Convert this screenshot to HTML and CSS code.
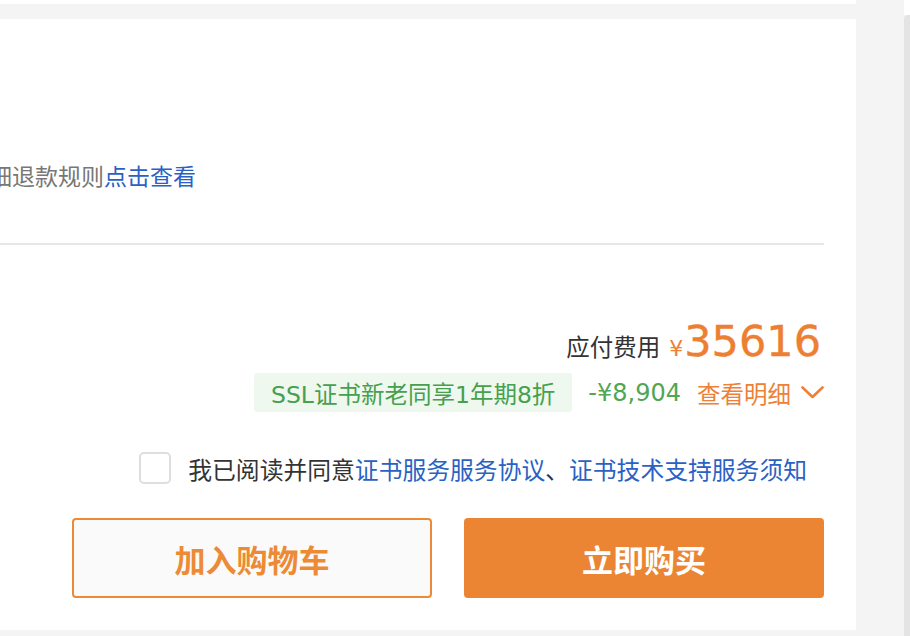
FILE: index.html
```html
<!DOCTYPE html>
<html lang="zh-CN">
<head>
<meta charset="utf-8">
<title>确认订单</title>
<link rel="stylesheet" href="styles.css">
</head>
<body>
<div class="main">
  <div class="prev-card"></div>
  <div class="card">
    <p class="refund"><span class="refund-text">细退款规则</span><a class="link" href="#">点击查看</a></p>
    <div class="divider"></div>
    <div class="price-row">
      <span class="price-label">应付费用</span>
      <span class="currency">¥</span>
      <span class="amount">35616</span>
    </div>
    <div class="discount-row">
      <span class="tag">SSL证书新老同享1年期8折</span>
      <span class="saving">-¥8,904</span>
      <a class="detail" href="#">查看明细
        <svg class="chev" width="23" height="13" viewBox="0 0 23 13" aria-hidden="true"><polyline points="1.5,1.5 11.5,11 21.5,1.5" fill="none" stroke="currentColor" stroke-width="2.6" stroke-linecap="round" stroke-linejoin="round"/></svg>
      </a>
    </div>
    <label class="agree-row">
      <span class="checkbox"></span>
      <span class="agree-text">我已阅读并同意<a class="link" href="#">证书服务服务协议</a>、<a class="link" href="#">证书技术支持服务须知</a></span>
    </label>
    <div class="btn-row">
      <button class="btn btn-ghost">加入购物车</button>
      <button class="btn btn-primary">立即购买</button>
    </div>
  </div>
</div>
<div class="side-gap"></div>
<div class="scroll">
  <div class="scroll-top"></div>
  <div class="scroll-track"></div>
</div>
</body>
</html>
```
FILE: styles.css
```css
html, body {
  margin: 0;
  padding: 0;
}
body {
  width: 910px;
  height: 636px;
  overflow: hidden;
  display: flex;
  background: #f4f4f4;
  font-family: "Liberation Sans", "Noto Sans CJK SC", sans-serif;
  color: #333;
}
.main {
  width: 856px;
  display: flex;
  flex-direction: column;
}
.prev-card {
  height: 4px;
  background: #fff;
}
.card {
  margin-top: 15px;
  height: 611px;
  box-sizing: border-box;
  background: #fff;
  padding: 0 32px 0 0;
  display: flex;
  flex-direction: column;
}
.refund {
  margin: 142px 0 0 -11px;
  font-size: 23px;
  line-height: 32px;
  color: #777;
  white-space: nowrap;
}
.link {
  color: #2a62c4;
  text-decoration: none;
}
.divider {
  margin-top: 50px;
  height: 2px;
  background: #e6e6e6;
}
.price-row {
  margin-top: 73px;
  margin-right: 3px;
  display: flex;
  justify-content: flex-end;
  align-items: baseline;
  height: 46px;
}
.price-label {
  font-size: 23.5px;
  color: #333;
}
.currency {
  margin-left: 9px;
  font-family: "DejaVu Sans", sans-serif;
  font-size: 22px;
  color: #ed7f33;
}
.amount {
  margin-left: 1px;
  font-family: "DejaVu Sans", sans-serif;
  font-size: 43px;
  line-height: 46px;
  color: #ed7f33;
  -webkit-text-stroke: 0.4px #ed7f33;
}
.discount-row {
  margin-top: 9px;
  display: flex;
  justify-content: flex-end;
  align-items: center;
  height: 39px;
}
.tag {
  height: 39px;
  padding: 0 17px;
  display: flex;
  align-items: center;
  background: #eef8ee;
  border-radius: 3px;
  color: #46a04e;
  font-family: "DejaVu Sans", "Noto Sans CJK SC", sans-serif;
  font-size: 23.5px;
}
.saving {
  margin-left: 16px;
  font-family: "DejaVu Sans", sans-serif;
  font-size: 24px;
  color: #52a552;
}
.detail {
  margin-left: 16px;
  display: flex;
  align-items: center;
  gap: 10px;
  font-size: 23.5px;
  color: #ee8038;
  text-decoration: none;
}
.chev {
  display: block;
}
.agree-row {
  margin-top: 40px;
  margin-right: 17px;
  display: flex;
  justify-content: flex-end;
  align-items: center;
  gap: 17px;
  height: 32px;
}
.checkbox {
  width: 32px;
  height: 32px;
  box-sizing: border-box;
  border: 2px solid #dedede;
  border-radius: 5px;
  background: #fff;
}
.agree-text {
  font-size: 23.8px;
  color: #333;
  white-space: nowrap;
}
.btn-row {
  margin-top: 34px;
  display: flex;
  justify-content: flex-end;
  gap: 32px;
}
.btn {
  width: 360px;
  height: 80px;
  box-sizing: border-box;
  border-radius: 4px;
  font-family: "Noto Sans CJK SC", sans-serif;
  font-size: 31px;
  font-weight: 700;
  cursor: pointer;
}
.btn-ghost {
  background: #fafafa;
  border: 2px solid #ec8a3a;
  color: #ec8a35;
}
.btn-primary {
  background: #eb8533;
  border: none;
  color: #fff;
}
.side-gap {
  width: 48px;
}
.scroll {
  width: 6px;
  display: flex;
  flex-direction: column;
}
.scroll-top {
  height: 15px;
  background: #fff;
}
.scroll-track {
  flex: 1;
  background: #e4e4e4;
  border-top-left-radius: 4px;
}
```
